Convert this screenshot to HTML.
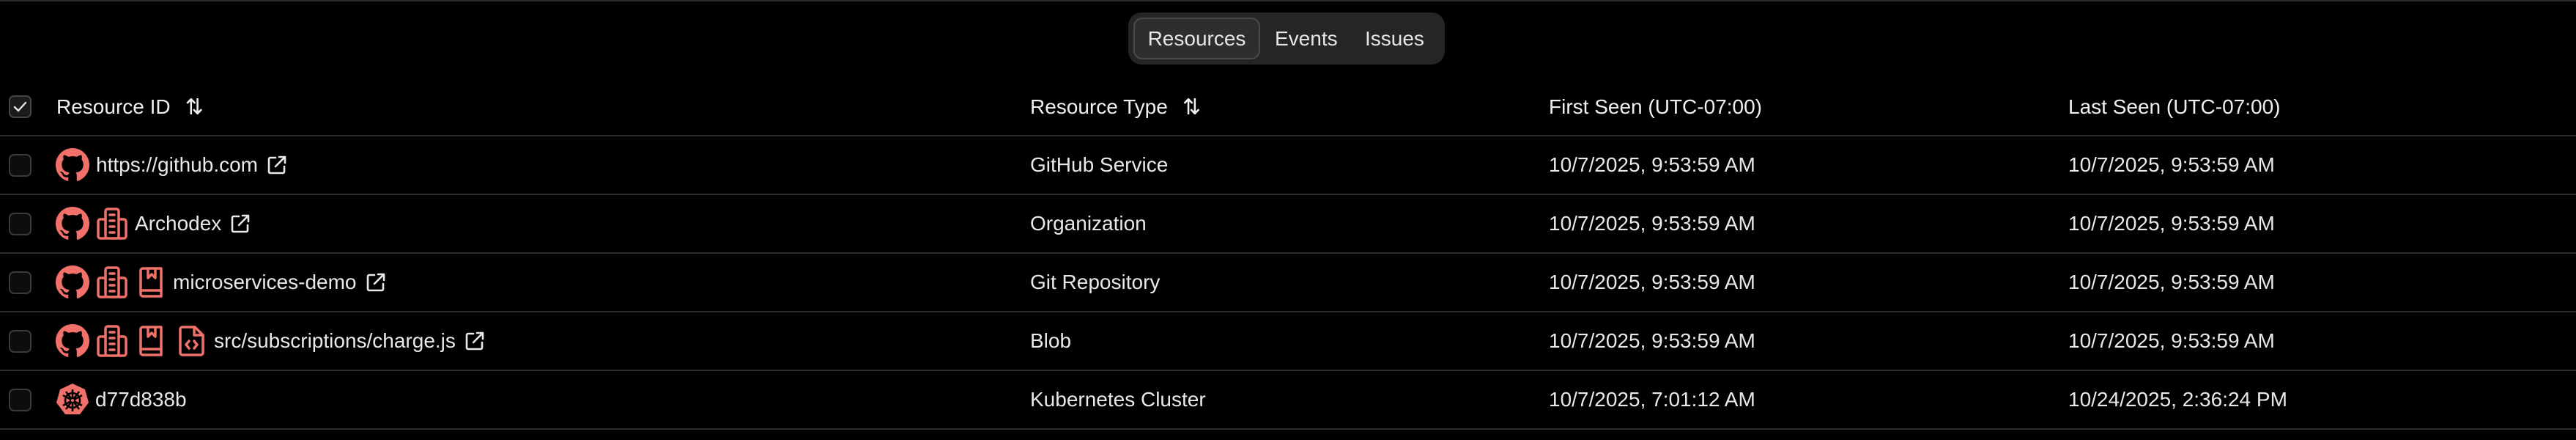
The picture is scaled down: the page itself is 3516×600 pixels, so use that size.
<!DOCTYPE html>
<html><head><meta charset="utf-8"><style>
*{margin:0;padding:0;box-sizing:border-box}
body{width:3516px;height:600px;background:#000;color:#e8e8e8;font-family:"Liberation Sans",sans-serif;font-size:28px;position:relative;overflow:hidden}
.top{position:absolute;left:0;top:0;width:3516px;height:2px;background:#2b2b2b}
.tabs{position:absolute;left:1540px;top:17px;width:432px;height:71px;background:#252527;border-radius:18px}
.tab{position:absolute;top:7px;height:57px;line-height:57px;font-size:28px;color:#e6e6e6}
.act{left:7px;width:173px;background:#2e2e31;border:2px solid #4a4a4d;border-radius:12px;text-align:center;line-height:53px}
.line{position:absolute;left:0;width:3516px;height:2px;background:#2b2b2b}
.cell{position:absolute;display:flex;align-items:center;height:40px;white-space:nowrap}
.cb{position:absolute;left:12px;width:31px;height:31px;border:2px solid #3a3a3a;border-radius:7px;background:#0d0d0d}
.h{font-weight:normal;color:#f0f0f0}
svg{flex:none}
.ic{margin-right:10px}
</style></head><body>
<div class="top"></div>
<div class="tabs">
<div class="tab act">Resources</div>
<div class="tab" style="left:200px">Events</div>
<div class="tab" style="left:323px">Issues</div>
</div>

<svg width="0" height="0" style="position:absolute">
<defs>
<symbol id="gh" viewBox="0 0 16 16"><path fill="#f0716a" d="M8 0C3.58 0 0 3.58 0 8c0 3.54 2.29 6.53 5.47 7.59.4.07.55-.17.55-.38 0-.19-.01-.82-.01-1.49-2.01.37-2.53-.49-2.69-.94-.09-.23-.48-.94-.82-1.13-.28-.15-.68-.52-.01-.53.63-.01 1.08.58 1.23.82.72 1.21 1.87.87 2.33.66.07-.52.28-.87.51-1.07-1.78-.2-3.640-.89-3.64-3.95 0-.87.31-1.59.82-2.15-.08-.2-.36-1.02.08-2.12 0 0 .67-.21 2.2.82.64-.18 1.32-.27 2-.27.68 0 1.36.09 2 .27 1.53-1.04 2.2-.82 2.2-.82.44 1.1.16 1.92.08 2.12.51.56.82 1.27.82 2.15 0 3.07-1.87 3.75-3.65 3.95.29.25.54.73.54 1.48 0 1.07-.01 1.93-.01 2.2 0 .21.15.46.55.38A8.013 8.013 0 0016 8c0-4.42-3.58-8-8-8z"/></symbol>
<symbol id="org" viewBox="0 0 42 44"><g fill="none" stroke="#f0716a" stroke-width="3.5" stroke-linejoin="round" stroke-linecap="round"><rect x="12" y="2" width="18" height="40" rx="3"/><path d="M12 16H5a3 3 0 0 0-3 3v20a3 3 0 0 0 3 3h7M30 16h7a3 3 0 0 1 3 3v20a3 3 0 0 1-3 3h-7M18 10h6M18 18h6M18 26h6M18 34h6"/></g></symbol>
<symbol id="repo" viewBox="0 0 34 42"><g fill="none" stroke="#f0716a" stroke-width="3.5" stroke-linejoin="round" stroke-linecap="round"><path d="M5 2h25v38H5a3 3 0 0 1-3-3V5a3 3 0 0 1 3-3z"/><path d="M2 32h28M12 2v13l5-5 5 5V2"/></g></symbol>
<symbol id="file" viewBox="0 0 35 42"><g fill="none" stroke="#f0716a" stroke-width="3.5" stroke-linejoin="round" stroke-linecap="round"><path d="M5 2h17l11 11v24a3 3 0 0 1-3 3H5a3 3 0 0 1-3-3V5a3 3 0 0 1 3-3z"/><path d="M21 2v11h12M14 21l-4 5 4 5M21 21l4 5-4 5"/></g></symbol>
<symbol id="ext" viewBox="0 0 28 28"><g fill="none" stroke="#e8e8e8" stroke-width="2.6" stroke-linecap="round" stroke-linejoin="round"><path d="M12 4H5a2 2 0 0 0-2 2v17a2 2 0 0 0 2 2h17a2 2 0 0 0 2-2v-7M17 3h8v8M25 3L12 16"/></g></symbol>
<symbol id="k8s" viewBox="0 0 46 46"><path fill="#f0716a" d="M23 1l17 8 5 18-12 16H13L1 27 6 9z"/><g fill="none" stroke="#000" stroke-width="2.6"><circle cx="23" cy="24" r="10"/><path d="M23 9v30M10 17l26 14M36 17L10 31M14 36L32 12M32 36L14 12"/></g><circle cx="23" cy="24" r="3" fill="#f0716a" stroke="#000" stroke-width="2"/></symbol>
</defs></svg>

<!-- header -->
<div class="cb" style="top:130px;background:#1a1a1a;border-color:#444"><svg width="27" height="27" viewBox="0 0 27 27" style="position:absolute;left:0;top:0"><path d="M6 14l5 5 10-11" fill="none" stroke="#e8e8e8" stroke-width="2.4" stroke-linecap="round" stroke-linejoin="round"/></svg></div>
<div class="cell h" style="left:77px;top:126px">Resource ID<span style="margin-left:20px;font-size:30px">⇅</span></div>
<div class="cell h" style="left:1406px;top:126px">Resource Type<span style="margin-left:20px;font-size:30px">⇅</span></div>
<div class="cell h" style="left:2114px;top:126px">First Seen (UTC-07:00)</div>
<div class="cell h" style="left:2823px;top:126px">Last Seen (UTC-07:00)</div>
<div class="line" style="top:184px"></div>

<!-- row1 -->
<div class="cb" style="top:210px"></div>
<div class="cell" style="left:76px;top:205px"><svg class="ic" width="46" height="46" style="margin-right:9px"><use href="#gh"/></svg>https://github.com<svg width="28" height="28" style="margin-left:12px"><use href="#ext"/></svg></div>
<div class="cell" style="left:1406px;top:205px">GitHub Service</div>
<div class="cell" style="left:2114px;top:205px">10/7/2025, 9:53:59 AM</div>
<div class="cell" style="left:2823px;top:205px">10/7/2025, 9:53:59 AM</div>
<div class="line" style="top:264px"></div>

<!-- row2 -->
<div class="cb" style="top:290px"></div>
<div class="cell" style="left:76px;top:285px"><svg class="ic" width="46" height="46"><use href="#gh"/></svg><svg class="ic" width="42" height="44"><use href="#org"/></svg>Archodex<svg width="28" height="28" style="margin-left:12px"><use href="#ext"/></svg></div>
<div class="cell" style="left:1406px;top:285px">Organization</div>
<div class="cell" style="left:2114px;top:285px">10/7/2025, 9:53:59 AM</div>
<div class="cell" style="left:2823px;top:285px">10/7/2025, 9:53:59 AM</div>
<div class="line" style="top:344px"></div>

<!-- row3 -->
<div class="cb" style="top:370px"></div>
<div class="cell" style="left:76px;top:365px"><svg class="ic" width="46" height="46"><use href="#gh"/></svg><svg class="ic" width="42" height="44" style="margin-right:16px"><use href="#org"/></svg><svg class="ic" width="34" height="42" style="margin-right:12px"><use href="#repo"/></svg>microservices-demo<svg width="28" height="28" style="margin-left:12px"><use href="#ext"/></svg></div>
<div class="cell" style="left:1406px;top:365px">Git Repository</div>
<div class="cell" style="left:2114px;top:365px">10/7/2025, 9:53:59 AM</div>
<div class="cell" style="left:2823px;top:365px">10/7/2025, 9:53:59 AM</div>
<div class="line" style="top:424px"></div>

<!-- row4 -->
<div class="cb" style="top:450px"></div>
<div class="cell" style="left:76px;top:445px"><svg class="ic" width="46" height="46"><use href="#gh"/></svg><svg class="ic" width="42" height="44" style="margin-right:16px"><use href="#org"/></svg><svg class="ic" width="34" height="42" style="margin-right:20px"><use href="#repo"/></svg><svg class="ic" width="35" height="42" style="margin-right:13px"><use href="#file"/></svg>src/subscriptions/charge.js<svg width="28" height="28" style="margin-left:12px"><use href="#ext"/></svg></div>
<div class="cell" style="left:1406px;top:445px">Blob</div>
<div class="cell" style="left:2114px;top:445px">10/7/2025, 9:53:59 AM</div>
<div class="cell" style="left:2823px;top:445px">10/7/2025, 9:53:59 AM</div>
<div class="line" style="top:504px"></div>

<!-- row5 -->
<div class="cb" style="top:530px"></div>
<div class="cell" style="left:76px;top:525px"><svg class="ic" width="46" height="46" style="margin-right:8px"><use href="#k8s"/></svg>d77d838b</div>
<div class="cell" style="left:1406px;top:525px">Kubernetes Cluster</div>
<div class="cell" style="left:2114px;top:525px">10/7/2025, 7:01:12 AM</div>
<div class="cell" style="left:2823px;top:525px">10/24/2025, 2:36:24 PM</div>
<div class="line" style="top:584px"></div>
</body></html>
